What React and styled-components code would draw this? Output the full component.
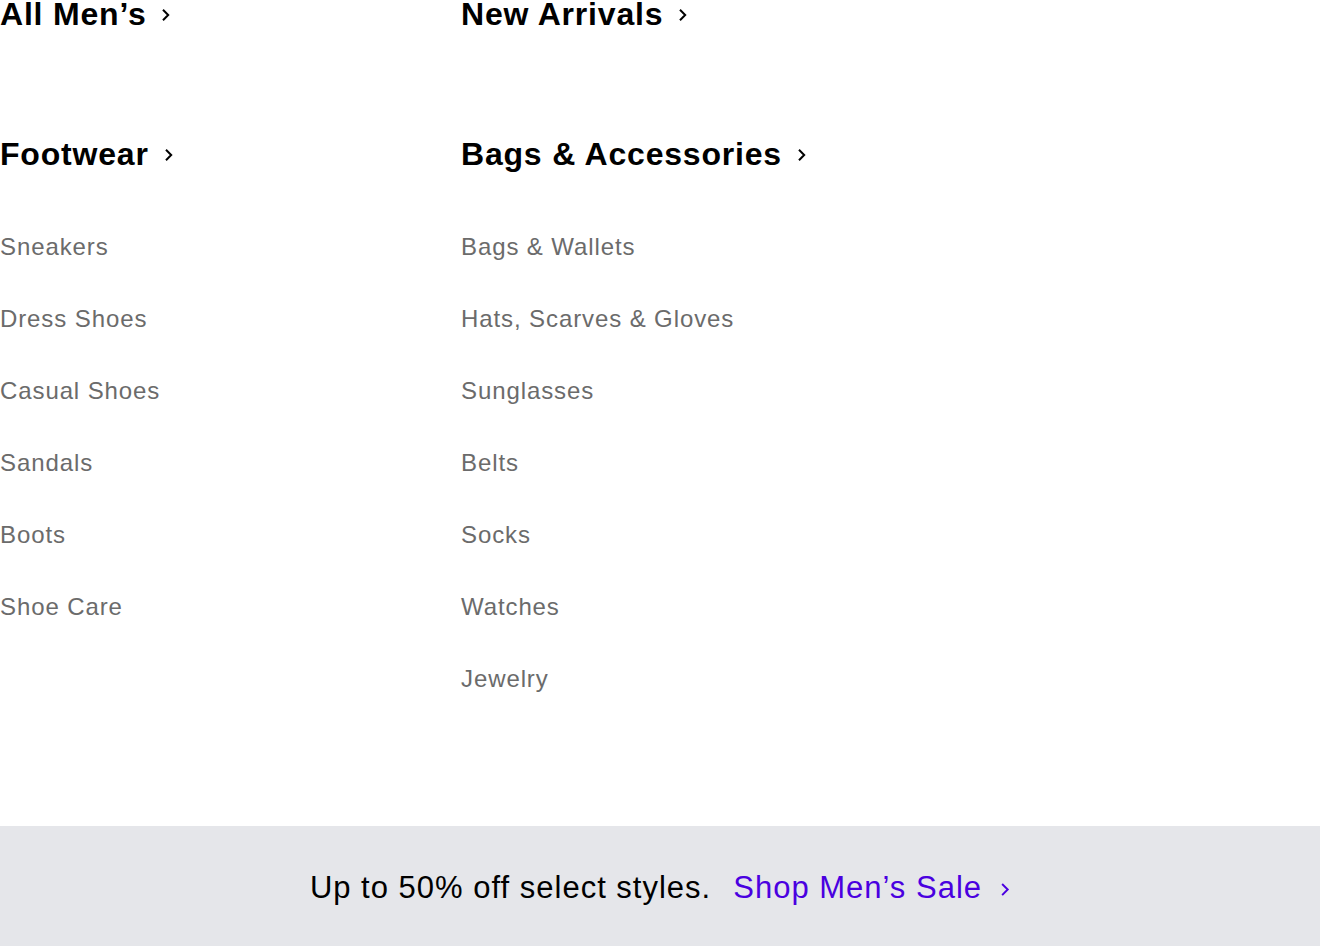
import React from 'react';
import styled, { createGlobalStyle } from 'styled-components';

const columns = [
  {
    top: 'All Men’s',
    heading: 'Footwear',
    items: ['Sneakers', 'Dress Shoes', 'Casual Shoes', 'Sandals', 'Boots', 'Shoe Care'],
  },
  {
    top: 'New Arrivals',
    heading: 'Bags & Accessories',
    items: ['Bags & Wallets', 'Hats, Scarves & Gloves', 'Sunglasses', 'Belts', 'Socks', 'Watches', 'Jewelry'],
  },
];

function Chevron({ size = 12, color = 'currentColor', stroke = 2 }) {
  return (
    <svg width={size * 0.7} height={size} viewBox="0 0 7 12" fill="none">
      <path d="M1 1.5 L5.5 6 L1 10.5" stroke={color} strokeWidth={stroke} strokeLinecap="square" />
    </svg>
  );
}

function App() {
  return (
    <>
      <GlobalStyle />
      <StyledRoot>
        <StyledColumns>
          {columns.map((col) => (
            <Column key={col.top} col={col} />
          ))}
        </StyledColumns>
        <StyledBanner>
          <span>Up to 50% off select styles.</span>
          <StyledSaleLink>
            Shop Men’s Sale
            <Chevron size={13} stroke={1.8} />
          </StyledSaleLink>
        </StyledBanner>
      </StyledRoot>
    </>
  );
}

function Column({ col }) {
  const { top, heading, items } = col;
  return (
    <StyledColumn>
      <StyledHeading $gap={112}>
        {top}
        <Chevron />
      </StyledHeading>
      <StyledHeading $gap={67}>
        {heading}
        <Chevron />
      </StyledHeading>
      <StyledList>
        {items.map((item) => (
          <li key={item}>{item}</li>
        ))}
      </StyledList>
    </StyledColumn>
  );
}

export default App;

const GlobalStyle = createGlobalStyle`
  body {
    margin: 0;
    background: #ffffff;
    font-family: "Liberation Sans", Arial, sans-serif;
  }
`;

const StyledRoot = styled.div`
  display: flex;
  flex-direction: column;
  width: 1320px;
`;

const StyledColumns = styled.div`
  display: grid;
  grid-template-columns: 461px 1fr;
  padding-bottom: 135px;
`;

const StyledColumn = styled.div`
  display: flex;
  flex-direction: column;
`;

const StyledHeading = styled.h2`
  display: flex;
  align-items: center;
  gap: 16px;
  margin: 0 0 ${({ $gap }) => $gap}px 0;
  font-size: 32px;
  line-height: 28px;
  font-weight: 700;
  letter-spacing: 0.8px;
  color: #000000;

  & > svg {
    margin-top: 1px;
  }
`;

const StyledList = styled.ul`
  display: flex;
  flex-direction: column;
  gap: 48px;
  margin: 0;
  padding: 0;
  list-style: none;

  & > li {
    font-size: 24px;
    line-height: 24px;
    letter-spacing: 0.9px;
    color: #6b6b6b;
  }
`;

const StyledBanner = styled.div`
  display: flex;
  justify-content: center;
  align-items: flex-start;
  gap: 22px;
  height: 120px;
  box-sizing: border-box;
  padding-top: 47px;
  background: #e5e6ea;
  font-size: 31px;
  line-height: 30px;
  letter-spacing: 1px;
  color: #000000;
`;

const StyledSaleLink = styled.span`
  display: flex;
  align-items: center;
  gap: 19px;
  color: #4a00e0;

  & > svg {
    margin-top: 2px;
  }
`;
